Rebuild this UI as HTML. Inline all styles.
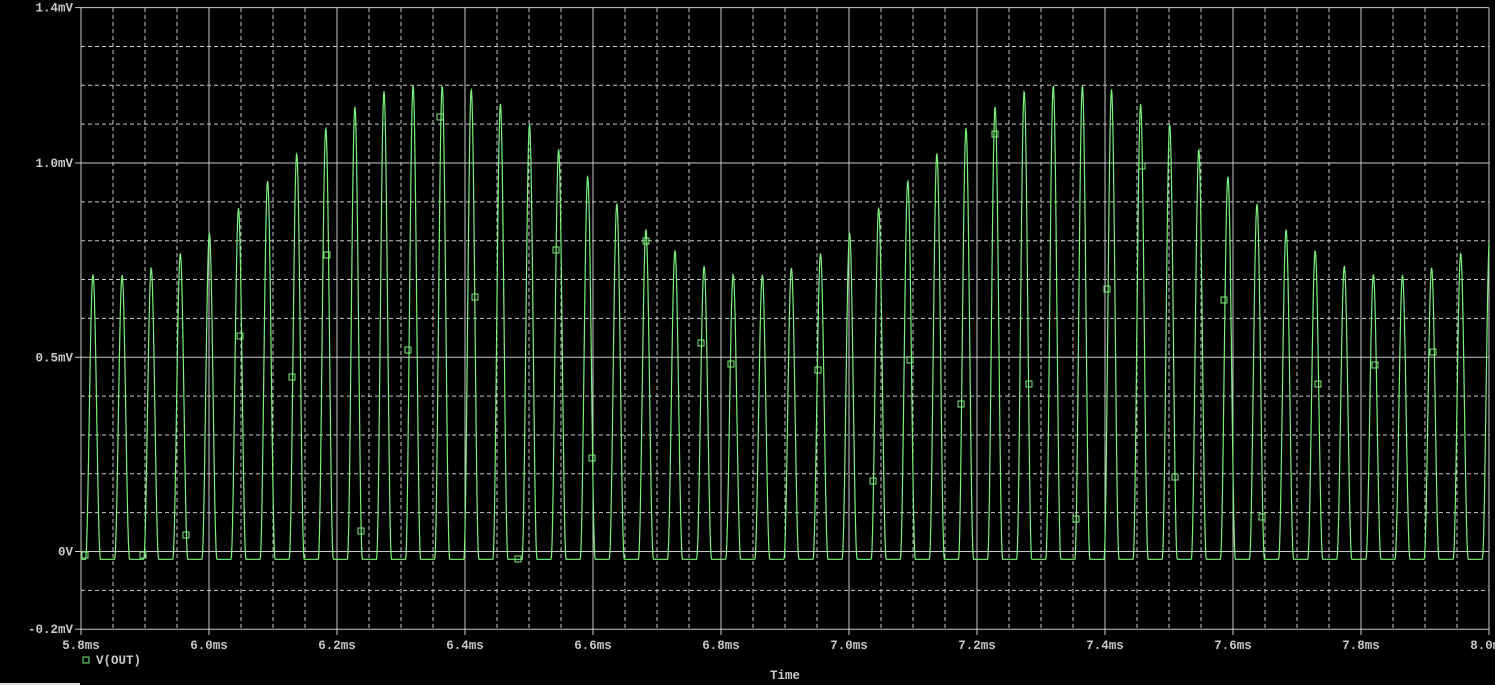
<!DOCTYPE html>
<html><head><meta charset="utf-8">
<style>
html,body{margin:0;padding:0;background:#000;width:1495px;height:685px;overflow:hidden}
svg{display:block}
text{font-family:"Liberation Mono","DejaVu Sans Mono",monospace;font-weight:bold;font-size:12.5px;fill:#c8c8c8}
</style></head>
<body>
<svg id="s" width="1495" height="685" xmlns="http://www.w3.org/2000/svg">
<g id="grid"></g>
<path id="tr" fill="none" stroke="#7cf07c" stroke-width="1.2"/>
<g id="mk" fill="none" stroke="#7cf07c" stroke-width="1"></g>
<g id="lbl"></g>
<text x="770" y="679">Time</text>
<rect x="83" y="657" width="6" height="6" fill="none" stroke="#7cf07c"/>
<text x="96" y="664">V(OUT)</text>
<rect x="0" y="683" width="80" height="2" fill="#ddd"/>
</svg>
<script>
var L=81,R=1489,T=8,B=629;
function Y(v){return 551.5-v*388.5;}
var g='';
for(var i=-2;i<=14;i++){var y=Y(i*0.1);var major=(i%5==0)||i==14||i==-2;
 g+='<line x1="'+L+'" x2="'+R+'" y1="'+y+'" y2="'+y+'" stroke="#c8c8c8" stroke-width="1"'+(major?'':' stroke-dasharray="4,3"')+'/>';}
for(var j=0;j<=44;j++){var x=L+j*32;var major=j%4==0;
 g+='<line x1="'+x+'" x2="'+x+'" y1="'+T+'" y2="'+B+'" stroke="#c8c8c8" stroke-width="1"'+(major?'':' stroke-dasharray="4,3"')+'/>';}
document.getElementById('grid').innerHTML=g;
var l='';
var yl=[[1.4,'1.4mV'],[1.0,'1.0mV'],[0.5,'0.5mV'],[0,'0V'],[-0.2,'-0.2mV']];
yl.forEach(function(a){var y=Y(a[0]);l+='<text x="73" y="'+(y+4)+'" text-anchor="end">'+a[1]+'</text><line x1="75" x2="81" y1="'+y+'" y2="'+y+'" stroke="#c8c8c8"/>';});
for(var k=0;k<=11;k++){var t=5.8+k*0.2;var x=L+k*128;l+='<text x="'+x+'" y="649" text-anchor="middle">'+t.toFixed(1)+'ms</text><line x1="'+x+'" x2="'+x+'" y1="629" y2="635" stroke="#c8c8c8"/>';}
document.getElementById('lbl').innerHTML=l;
function val(x){
 var P=29.1,c0=93;var k=Math.round((x-c0)/P);var c=c0+k*P;var d=Math.abs(x-c);
 var A=0.96+0.25*Math.cos(2*Math.PI*(c-430)/640);if(A>1.2)A=1.2;
 var w=7.5;var s=0;if(d<w){s=Math.pow(Math.cos(Math.PI*d/(2*w)),2);}
 return -0.02+(A+0.02)*s;}
var p='';
for(var x=L;x<=R;x+=0.5){p+=(x==L?'M':'L')+x+' '+Y(val(x)).toFixed(1)+' ';}
document.getElementById('tr').setAttribute('d',p);
var mk=[[85,555],[143,555],[186,535],[240,336],[292,377],[327,255],[361,531],[408,350],[440,117],[475,297],[518,559],[556,250],[592,458],[646,241],[701,343],[731,364],[818,370],[873,481],[910,360],[961,404],[995,134],[1029,384],[1076,519],[1107,289],[1142,166],[1175,477],[1224,300],[1262,517],[1318,384],[1375,365],[1433,352]];
var m='';mk.forEach(function(a){m+='<rect x="'+(a[0]-3)+'" y="'+(a[1]-3)+'" width="6" height="6"/>';});
document.getElementById('mk').innerHTML=m;
</script>
</body></html>
